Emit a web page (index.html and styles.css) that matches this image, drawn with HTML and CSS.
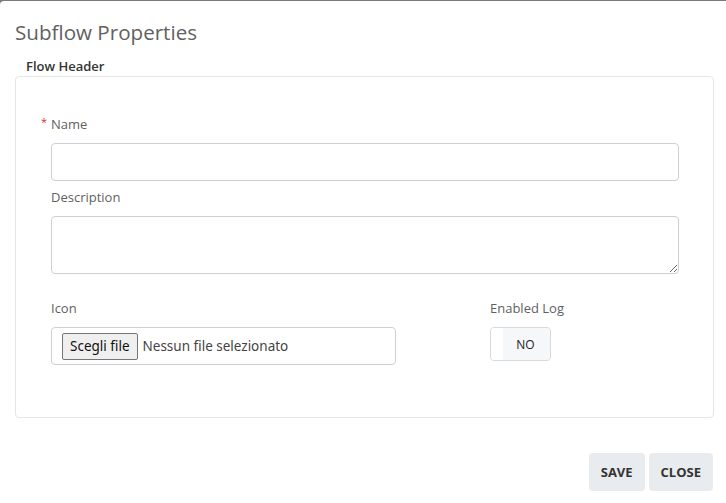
FILE: index.html
```html
<!DOCTYPE html>
<html lang="it">
<head>
<meta charset="utf-8">
<title>Subflow Properties</title>
<link rel="stylesheet" href="styles.css">
</head>
<body>
<div class="dialog">
  <h1 class="dialog-title">Subflow Properties</h1>
  <div class="section-label">Flow Header</div>
  <div class="panel">
    <div class="field">
      <label class="field-label required">Name</label>
      <input class="text-input" type="text">
    </div>
    <div class="field">
      <label class="field-label">Description</label>
      <textarea class="text-area"></textarea>
    </div>
    <div class="bottom-row">
      <div class="field">
        <label class="field-label">Icon</label>
        <div class="file-box">
          <span class="file-btn">Scegli file</span>
          <span class="file-name">Nessun file selezionato</span>
        </div>
      </div>
      <div class="field">
        <label class="field-label">Enabled Log</label>
        <div class="toggle">
          <span class="toggle-knob"></span>
          <span class="toggle-text">NO</span>
        </div>
      </div>
    </div>
  </div>
  <div class="actions">
    <button class="btn">SAVE</button>
    <button class="btn">CLOSE</button>
  </div>
</div>
</body>
</html>
```

FILE: styles.css
```css
html, body {
  margin: 0;
  height: 100%;
  overflow: hidden;
}
body {
  background: #7b7b7b;
  font-family: "Open Sans", "Noto Sans", sans-serif;
  color: #555;
}
.dialog {
  margin-top: 1px;
  background: #fff;
  border-top-left-radius: 4px;
  height: calc(100% - 1px);
  box-sizing: border-box;
}
.dialog-title {
  margin: 0;
  padding: 17px 0 0 15px;
  font-size: 20.6px;
  font-weight: 400;
  line-height: 28px;
  color: #616161;
}
.section-label {
  margin: 11px 0 0 26px;
  font-size: 13px;
  font-weight: 600;
  line-height: 18px;
  color: #333;
}
.panel {
  margin: 1px 12px 0 15px;
  border: 1px solid #e6e6e6;
  border-radius: 4px;
  padding: 38px 34px 52px 35px;
}
.field {
  display: flex;
  flex-direction: column;
}
.field-label {
  font-size: 13px;
  line-height: 18px;
  color: #5f5f5f;
  margin-bottom: 10px;
}
.field-label.required {
  position: relative;
}
.field-label.required::before {
  content: "*";
  position: absolute;
  left: -10px;
  top: -2px;
  color: #d9322b;
  font-size: 11px;
}
.text-input {
  height: 38px;
  box-sizing: border-box;
  border: 1px solid #ccd0d6;
  border-radius: 4px;
  margin: 0 0 7px;
}
.text-area {
  height: 58px;
  box-sizing: border-box;
  border: 1px solid #ccd0d6;
  border-radius: 4px;
  margin: 0 0 25px;
  resize: vertical;
}
.bottom-row {
  display: grid;
  grid-template-columns: 439px 1fr;
}
.file-box {
  width: 345px;
  height: 38px;
  box-sizing: border-box;
  border: 1px solid #ccd0d6;
  border-radius: 4px;
  display: flex;
  align-items: center;
  padding-left: 10px;
  font-family: "Noto Sans", "Open Sans", sans-serif;
  font-size: 13.5px;
}
.file-btn {
  box-sizing: border-box;
  height: 27px;
  line-height: 25px;
  padding: 0 7px;
  border: 1px solid #767676;
  border-radius: 2px;
  background: #efefef;
  color: #111;
}
.file-name {
  margin-left: 5px;
  color: #444;
}
.toggle {
  width: 61px;
  height: 34px;
  box-sizing: border-box;
  border: 1px solid #d6d9dd;
  border-radius: 4px;
  display: flex;
  overflow: hidden;
}
.toggle-knob {
  width: 12px;
  background: #fff;
}
.toggle-text {
  flex: 1;
  background: #f6f7f9;
  display: flex;
  align-items: center;
  justify-content: center;
  font-size: 12px;
  color: #222;
  padding-right: 2px;
}
.actions {
  display: flex;
  justify-content: flex-end;
  gap: 4px;
  margin: 35px 13px 0 0;
}
.btn {
  height: 38px;
  padding: 0 12px;
  border: none;
  border-radius: 4px;
  background: #e9ecef;
  font-family: "Open Sans", sans-serif;
  font-size: 13px;
  font-weight: 700;
  color: #333;
}
```
